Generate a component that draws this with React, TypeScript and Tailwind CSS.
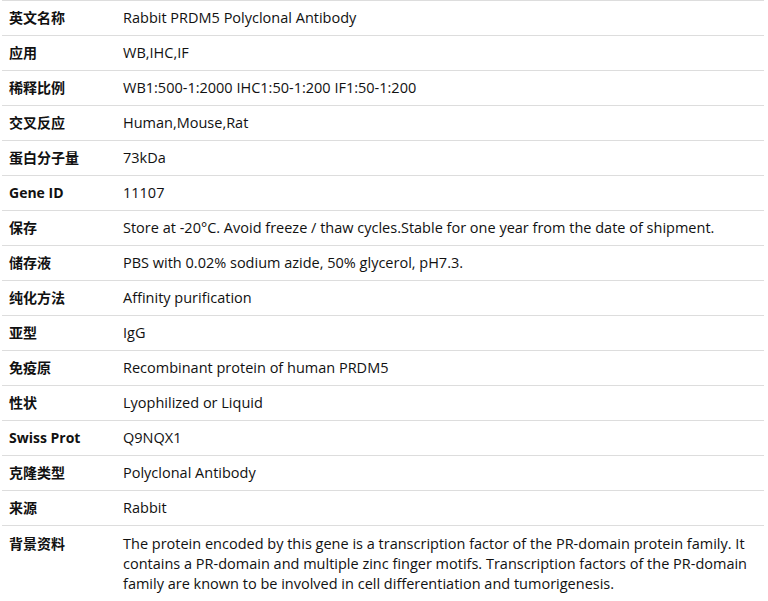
const rows: [string, React.ReactNode][] = [
  ['英文名称', 'Rabbit PRDM5 Polyclonal Antibody'],
  ['应用', 'WB,IHC,IF'],
  ['稀释比例', 'WB1:500-1:2000 IHC1:50-1:200 IF1:50-1:200'],
  ['交叉反应', 'Human,Mouse,Rat'],
  ['蛋白分子量', '73kDa'],
  ['Gene ID', '11107'],
  ['保存', 'Store at -20°C. Avoid freeze / thaw cycles.Stable for one year from the date of shipment.'],
  ['储存液', 'PBS with 0.02% sodium azide, 50% glycerol, pH7.3.'],
  ['纯化方法', 'Affinity purification'],
  ['亚型', 'IgG'],
  ['免疫原', 'Recombinant protein of human PRDM5'],
  ['性状', 'Lyophilized or Liquid'],
  ['Swiss Prot', 'Q9NQX1'],
  ['克隆类型', 'Polyclonal Antibody'],
  ['来源', 'Rabbit'],
  [
    '背景资料',
    <>
      The protein encoded by this gene is a transcription factor of the PR-domain protein family. It
      <br />
      contains a PR-domain and multiple zinc finger motifs. Transcription factors of the PR-domain
      <br />
      family are known to be involved in cell differentiation and tumorigenesis.
    </>,
  ],
];

export default function App() {
  return (
    <div
      className="min-h-[601px] bg-white pl-[2px] text-[#111]"
      style={{ fontFamily: '"Segoe UI", "Open Sans", "Noto Sans CJK SC", sans-serif' }}
    >
      <div className="w-[762px]">
        {rows.map(([label, value], i) => {
          const last = i === rows.length - 1;
          return (
            <div
              key={i}
              className={`grid grid-cols-[114px_1fr] border-t border-[#dddddd] leading-[20px] ${last ? 'items-start pt-[8px] pb-[6px]' : 'h-[35px] items-center'}`}
            >
              <div className="px-[7px] text-[14px] font-bold">{label}</div>
              <div className="px-[7px] text-[14.5px] whitespace-nowrap">{value}</div>
            </div>
          );
        })}
      </div>
    </div>
  );
}
